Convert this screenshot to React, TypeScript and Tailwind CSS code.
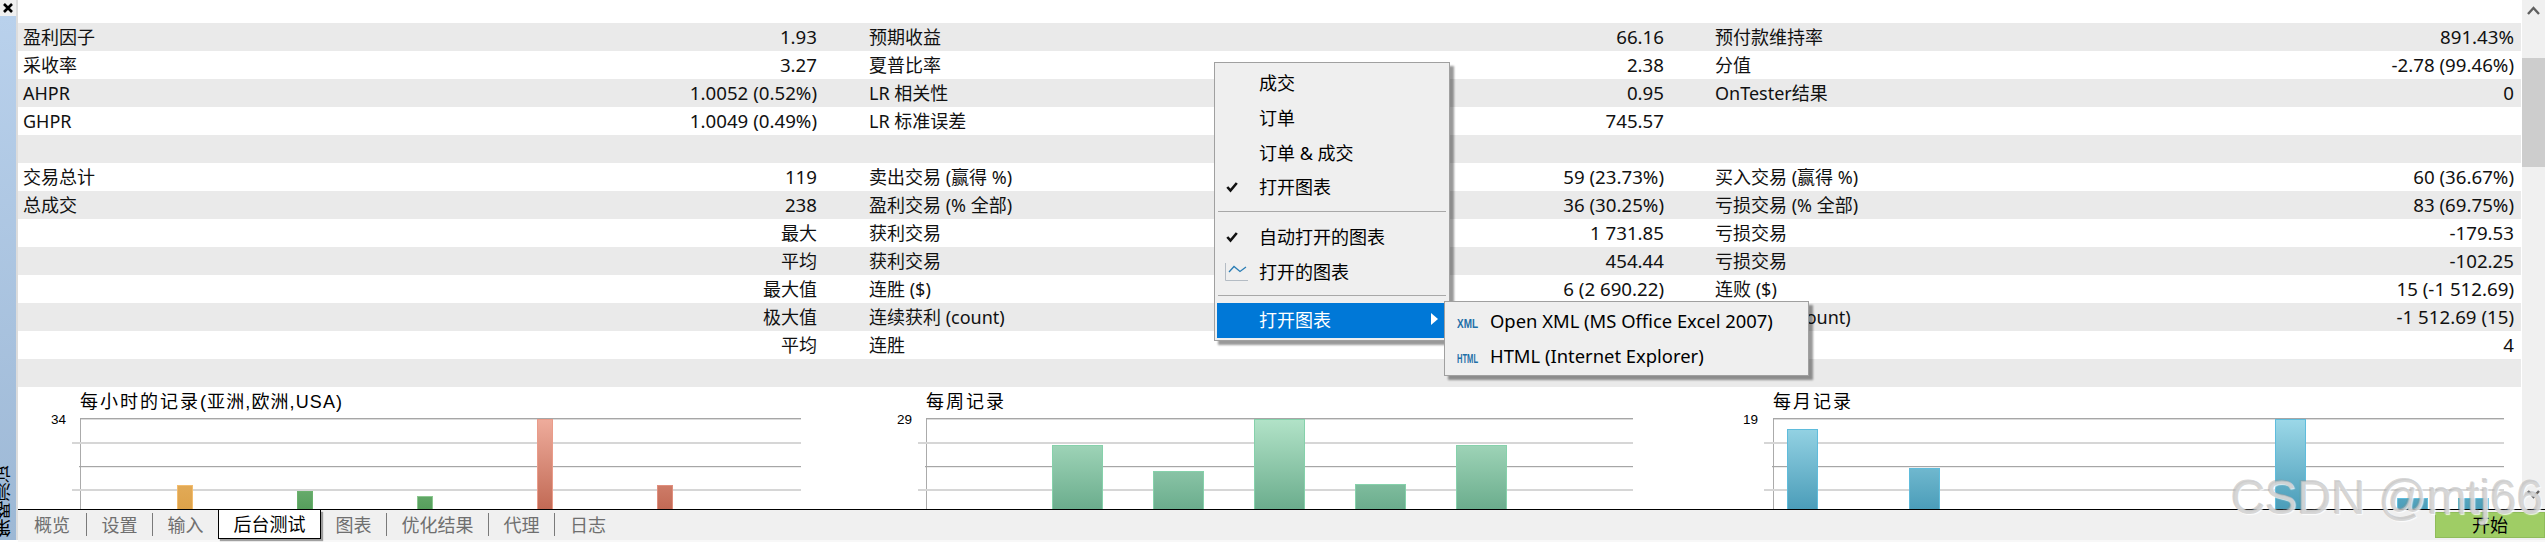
const rows: [string, string, string, string, string, string][] = [
  ["盈利因子", "1.93", "预期收益", "66.16", "预付款维持率", "891.43%"],
  ["采收率", "3.27", "夏普比率", "2.38", "分值", "-2.78 (99.46%)"],
  ["AHPR", "1.0052 (0.52%)", "LR 相关性", "0.95", "OnTester结果", "0"],
  ["GHPR", "1.0049 (0.49%)", "LR 标准误差", "745.57", "", ""],
  ["", "", "", "", "", ""],
  ["交易总计", "119", "卖出交易 (赢得 %)", "59 (23.73%)", "买入交易 (赢得 %)", "60 (36.67%)"],
  ["总成交", "238", "盈利交易 (% 全部)", "36 (30.25%)", "亏损交易 (% 全部)", "83 (69.75%)"],
  ["", "最大", "获利交易", "1 731.85", "亏损交易", "-179.53"],
  ["", "平均", "获利交易", "454.44", "亏损交易", "-102.25"],
  ["", "最大值", "连胜 ($)", "6 (2 690.22)", "连败 ($)", "15 (-1 512.69)"],
  ["", "极大值", "连续获利 (count)", "", "连续亏损 (count)", "-1 512.69 (15)"],
  ["", "平均", "连胜", "", "", "4"],
  ["", "", "", "", "", ""],
];

type Bar = { x: number; w: number; top: number; fill: string; stroke: string };

const charts: {
  title: string;
  titleTail?: string;
  label: string;
  origin: number;
  width: number;
  axis: number;
  gridStart: number;
  right: number;
  labelEnd: number;
  bars: Bar[];
}[] = [
  {
    title: "每小时的记录",
    titleTail: "(亚洲,欧洲,USA)",
    label: "34",
    origin: 18,
    width: 845,
    axis: 80,
    gridStart: 72,
    right: 801,
    labelEnd: 66,
    bars: [
      { x: 177, w: 16, top: 485, fill: "url(#orange)", stroke: "#f3bd6f" },
      { x: 297, w: 16, top: 491, fill: "url(#green)", stroke: "#69b16d" },
      { x: 417, w: 16, top: 496, fill: "url(#green)", stroke: "#8cc790" },
      { x: 537, w: 16, top: 419, fill: "url(#red)", stroke: "#ea9c8a" },
      { x: 657, w: 16, top: 485, fill: "url(#red)", stroke: "#e08f7e" },
    ],
  },
  {
    title: "每周记录",
    label: "29",
    origin: 863,
    width: 847,
    axis: 926,
    gridStart: 918,
    right: 1633,
    labelEnd: 912,
    bars: [
      { x: 1052, w: 51, top: 445, fill: "url(#mint)", stroke: "#86d1ab" },
      { x: 1153, w: 51, top: 471, fill: "url(#mint)", stroke: "#86d1ab" },
      { x: 1254, w: 51, top: 419, fill: "url(#mint)", stroke: "#86d1ab" },
      { x: 1355, w: 51, top: 484, fill: "url(#mint)", stroke: "#86d1ab" },
      { x: 1456, w: 51, top: 445, fill: "url(#mint)", stroke: "#86d1ab" },
    ],
  },
  {
    title: "每月记录",
    label: "19",
    origin: 1710,
    width: 811,
    axis: 1773,
    gridStart: 1764,
    right: 2504,
    labelEnd: 1758,
    bars: [
      { x: 1787, w: 31, top: 429, fill: "url(#blue)", stroke: "#5fbcdc" },
      { x: 1909, w: 31, top: 468, fill: "url(#blue)", stroke: "#5fbcdc" },
      { x: 2275, w: 31, top: 419, fill: "url(#blue)", stroke: "#5fbcdc" },
      { x: 2397, w: 31, top: 498, fill: "url(#blue)", stroke: "#5fbcdc" },
      { x: 2458, w: 31, top: 498, fill: "url(#blue)", stroke: "#5fbcdc" },
    ],
  },
];

const tabs = [
  { label: "概览", w: "w-[69px]" },
  { label: "设置", w: "w-[66px]" },
  { label: "输入", w: "w-[65px]" },
  { label: "后台测试", w: "w-[103px]", active: true },
  { label: "图表", w: "w-[66px]" },
  { label: "优化结果", w: "w-[102px]" },
  { label: "代理", w: "w-[66px]" },
  { label: "日志", w: "w-[66px]" },
];

function Gradients() {
  const grads: [string, string, string][] = [
    ["orange", "#efc07a", "#dda24a"],
    ["green", "#a5d6a6", "#569f5c"],
    ["red", "#eeac9c", "#c26a55"],
    ["mint", "#b2e3c8", "#6bad8d"],
    ["blue", "#9cd8e8", "#4b9db9"],
  ];
  return (
    <defs>
      {grads.map(([id, a, b]) => (
        <linearGradient key={id} id={id} gradientUnits="userSpaceOnUse" x1="0" y1="419" x2="0" y2="509">
          <stop offset="0" stopColor={a} />
          <stop offset="1" stopColor={b} />
        </linearGradient>
      ))}
    </defs>
  );
}

function Chart({ chart, first }: { chart: (typeof charts)[number]; first?: boolean }) {
  const { origin, width, axis, gridStart, right, labelEnd } = chart;
  return (
    <div className="flex flex-col">
      <div
        className="h-[28px] pt-[2px] text-[18px] leading-[26px] tracking-[2px] text-black font-['Liberation_Sans','Noto_Sans_CJK_SC',sans-serif]"
        style={{ paddingLeft: axis - origin }}
      >
        {chart.title}
        {chart.titleTail && <span className="tracking-[1.1px]">{chart.titleTail}</span>}
      </div>
      <svg className="block" width={width} height={94} viewBox={`${origin} 415 ${width} 94`}>
        <Gradients />
        <rect x={axis} y={419} width={1} height={90} fill="#ababab" />
        <rect x={axis} y={418} width={right - axis} height={1.4} fill="#a6a6a6" />
        <rect x={gridStart} y={442} width={right - gridStart} height={2} fill="#d6d6d6" />
        <rect x={axis - 1} y={466} width={right - axis + 1} height={1.2} fill="#a6a6a6" />
        <rect x={gridStart} y={489} width={right - gridStart} height={2} fill="#d6d6d6" />
        {chart.bars.map((b) => (
          <rect
            key={b.x}
            x={b.x + 0.5}
            y={b.top + 0.5}
            width={b.w - 1}
            height={509 - b.top}
            fill={b.fill}
            stroke={b.stroke}
          />
        ))}
        <text
          x={labelEnd}
          y={424}
          textAnchor="end"
          fontSize={13.5}
          fill="#000"
          fontFamily="'Liberation Sans', sans-serif"
        >
          {chart.label}
        </text>
        {first && (
          <text x={67} y={517.5} textAnchor="end" fontSize={13.5} fill="#000" fontFamily="'Liberation Sans', sans-serif">
            00
          </text>
        )}
      </svg>
    </div>
  );
}

function Check() {
  return (
    <svg width="12" height="12" viewBox="0 0 12 12" className="block">
      <path d="M1.3 6 L4.5 9.6 L10.8 2" fill="none" stroke="#111" strokeWidth="2.6" />
    </svg>
  );
}

function MenuItem({
  label,
  icon,
  active,
}: {
  label: string;
  icon?: React.ReactNode;
  active?: boolean;
}) {
  return (
    <div
      className={`relative flex h-[34.67px] items-center pl-[42px] ${
        active ? "bg-[#0078d7] text-white" : "text-black"
      }`}
    >
      {icon && <span className="absolute left-[9px] top-1/2 -translate-y-1/2">{icon}</span>}
      {label}
      {active && (
        <svg width="7" height="12" viewBox="0 0 7 12" className="absolute left-[214px] top-[10px]">
          <path d="M0 0 L7 6 L0 12 Z" fill="#fff" />
        </svg>
      )}
    </div>
  );
}

function SubItem({ tag, label, squeeze }: { tag: string; label: string; squeeze: string }) {
  return (
    <div className="flex h-[35px] items-center pl-[12px] text-[18.4px] text-black">
      <span className="w-[33px] shrink-0">
        <span
          className={`inline-block origin-left text-[12px] font-bold leading-none text-[#1f6fa8] font-['Liberation_Sans',sans-serif] ${squeeze}`}
        >
          {tag}
        </span>
      </span>
      {label}
    </div>
  );
}

function Cell({ label, value, className }: { label: string; value: string; className: string }) {
  const cjk = /[\u4e00-\u9fff]/.test(value);
  return (
    <div className={`flex justify-between ${className}`}>
      <span>{label}</span>
      <span className={cjk ? "" : "text-[18.7px]"}>{value}</span>
    </div>
  );
}

export default function App() {
  return (
    <div className="relative flex h-[542px] w-[2545px] overflow-hidden bg-white text-[18px] leading-[28px] text-[#111] font-['Noto_Sans','Noto_Sans_CJK_SC',sans-serif]">
      {/* vertical title strip */}
      <div className="flex h-[540px] w-[18px] shrink-0 flex-col border-r-2 border-[#dcdcdc]">
        <div className="flex h-[16px] items-center bg-[#f0f0f0] pl-[3px]">
          <svg width="10" height="10" viewBox="0 0 10 10">
            <path d="M1 1 L9 9 M9 1 L1 9" stroke="#000" strokeWidth="2.6" />
          </svg>
        </div>
        <div className="flex flex-1 flex-col items-start justify-end overflow-hidden bg-gradient-to-b from-[#b9d1ec] to-[#9db8d5] pb-[3px]">
          <span className="-ml-[6px] rotate-180 text-[18px] leading-[18px] text-black [writing-mode:vertical-rl]">
            策略测试
          </span>
        </div>
      </div>

      <div className="flex min-w-0 flex-1 flex-col">
        <div className="flex h-[491px]">
          <div className="w-[2503px]">
            <div className="pt-[23px]">
              {rows.map((r, i) => (
                <div
                  key={i}
                  className={`grid h-[28px] grid-cols-[845px_847px_811px] ${i % 2 === 0 ? "bg-[#eaeaea]" : "bg-white"}`}
                >
                  <Cell label={r[0]} value={r[1]} className="pl-[5px] pr-[46px]" />
                  <Cell label={r[2]} value={r[3]} className="pl-[6px] pr-[46px]" />
                  <Cell label={r[4]} value={r[5]} className="pl-[5px] pr-[7px]" />
                </div>
              ))}
            </div>
            <div className="grid h-[122px] grid-cols-[845px_847px_811px] overflow-hidden">
              {charts.map((c, i) => (
                <Chart key={c.label} chart={c} first={i === 0} />
              ))}
            </div>
          </div>
          {/* scrollbar */}
          <div className="ml-px flex h-[509px] w-[23px] flex-col bg-[#f0f0f0]">
            <div className="flex h-[58px] justify-center pt-[6px]">
              <svg width="13" height="9" viewBox="0 0 13 9">
                <path d="M1 8 L6.5 2 L12 8" fill="none" stroke="#606060" strokeWidth="2.4" />
              </svg>
            </div>
            <div className="h-[109px] bg-[#cdcdcd]" />
            <div className="flex flex-1 items-end justify-center pb-[10px]">
              <svg width="13" height="9" viewBox="0 0 13 9">
                <path d="M1 1 L6.5 7 L12 1" fill="none" stroke="#606060" strokeWidth="2.4" />
              </svg>
            </div>
          </div>
        </div>

        {/* bottom tabs */}
        <div className="relative mt-[18px] flex h-[31px] border-t border-black bg-[#f0f0f0]">
          {tabs.map((t, i) =>
            t.active ? (
              <div
                key={t.label}
                className={`${t.w} flex h-[29px] items-center justify-center border-x border-b border-black bg-white text-black shadow-[2px_2px_1px_rgba(0,0,0,0.35)]`}
              >
                {t.label}
              </div>
            ) : (
              <div
                key={t.label}
                className={`${t.w} mt-[3px] flex h-[23px] items-center justify-center text-[#6f6f6f] ${
                  i < tabs.length - 1 && !tabs[i + 1].active ? "border-r border-[#7a7a7a]" : ""
                }`}
              >
                {t.label}
              </div>
            ),
          )}
          <div className="ml-auto mt-[2px] flex h-[26px] w-[110px] items-center justify-center border border-[#8fbc5a] bg-[#9fcd65] text-black">
            开始
          </div>
        </div>
        <div className="h-[2px] flex-1 bg-[#f8f8f8]" />
      </div>

      {/* context menu */}
      <div className="absolute left-[1214px] top-[62px] z-10 h-[279px] w-[236px] border border-[#a0a0a0] bg-[#efefef] px-[2px] pt-[3px] shadow-[4px_4px_2px_rgba(0,0,0,0.4)]">
        <MenuItem label="成交" />
        <MenuItem label="订单" />
        <MenuItem label="订单 & 成交" />
        <MenuItem label="打开图表" icon={<Check />} />
        <div className="mx-px mb-[8px] mt-[6px] h-px bg-[#a8a8a8]" />
        <MenuItem label="自动打开的图表" icon={<Check />} />
        <MenuItem
          label="打开的图表"
          icon={
            <svg width="23" height="18" viewBox="0 0 23 18" className="-ml-px block">
              <path d="M0.5 0 V17.5 H23" fill="none" stroke="#b4bcc4" strokeWidth="1" />
              <path d="M4 9 L9 3.5 L15 8.5 L21 4" fill="none" stroke="#2a7db5" strokeWidth="1.3" />
            </svg>
          }
        />
        <div className="mx-px mb-[7px] mt-[6px] h-px bg-[#a8a8a8]" />
        <MenuItem label="打开图表" active />
      </div>

      {/* submenu */}
      <div className="absolute left-[1444px] top-[301px] z-20 h-[75px] w-[365px] border border-[#a0a0a0] bg-[#efefef] pt-px shadow-[4px_4px_2px_rgba(0,0,0,0.4)]">
        <SubItem tag="XML" label="Open XML (MS Office Excel 2007)" squeeze="scale-x-[0.83]" />
        <SubItem tag="HTML" label="HTML (Internet Explorer)" squeeze="scale-x-[0.63]" />
      </div>

      {/* watermark */}
      <div className="pointer-events-none absolute left-[2231px] top-[470px] z-30 text-[47.5px] leading-[56px] text-[rgba(200,200,200,0.7)] [text-shadow:1px_1px_1px_rgba(255,255,255,0.8),-1px_-1px_0_rgba(150,150,150,0.4)] font-['Liberation_Sans',sans-serif]">
        CSDN @mtj66
      </div>
    </div>
  );
}
